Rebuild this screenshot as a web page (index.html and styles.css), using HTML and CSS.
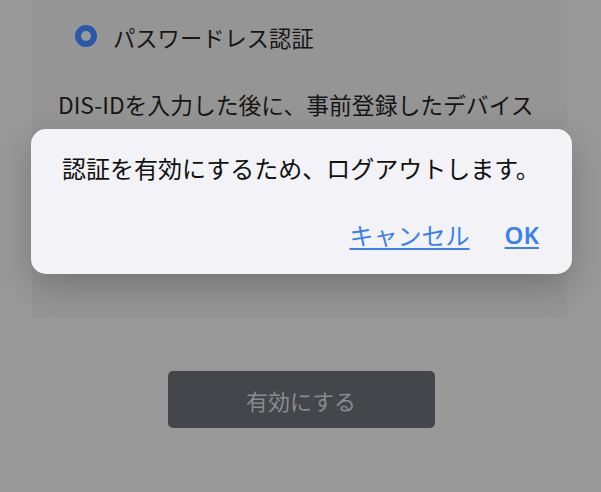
FILE: index.html
```html
<!DOCTYPE html>
<html lang="ja">
<head>
<meta charset="utf-8">
<link rel="stylesheet" href="styles.css">
</head>
<body>
<div class="page">
  <div class="card">
    <div class="radio-row">
      <span class="radio"></span>
      <span class="radio-label">パスワードレス認証</span>
    </div>
    <p class="desc">DIS-IDを入力した後に、事前登録したデバイス</p>
  </div>
  <div class="actions">
    <button class="enable">有効にする</button>
  </div>
</div>
<div class="dialog">
  <p class="message">認証を有効にするため、ログアウトします。</p>
  <div class="dialog-buttons">
    <a class="link" href="#">キャンセル</a>
    <a class="link ok" href="#">OK</a>
  </div>
</div>
</body>
</html>
```
FILE: styles.css
```css
html, body {
  margin: 0;
  padding: 0;
  background: #999999;
  font-family: "Noto Sans CJK JP", "Noto Sans", sans-serif;
  width: 601px;
  height: 492px;
  overflow: hidden;
}
.page {
  display: flex;
  flex-direction: column;
}
.card {
  margin-left: 32px;
  width: 535px;
  height: 318px;
  background: #959595;
  box-sizing: border-box;
  padding: 21px 0 0 43px;
}
.radio-row {
  display: flex;
  align-items: center;
  gap: 16px;
  height: 30px;
}
.radio {
  width: 22px;
  height: 22px;
  box-sizing: border-box;
  border-radius: 50%;
  border: 6px solid #2a59ab;
  background: #9a9a9a;
}
.radio-label {
  font-size: 22.3px;
  color: #161616;
  line-height: 30px;
  position: relative;
  top: 1px;
}
.desc {
  margin: 39px 0 0 -17px;
  font-size: 22.8px;
  line-height: 30px;
  color: #161616;
  white-space: nowrap;
}
.actions {
  display: flex;
  justify-content: center;
  padding-top: 53px;
  padding-left: 1px;
}
.enable {
  width: 267px;
  height: 57px;
  border: none;
  border-radius: 5px;
  background: #43464b;
  color: #8b8b8b;
  font-family: "Noto Sans CJK JP", sans-serif;
  font-size: 22px;
}
.dialog {
  position: absolute;
  left: 31px;
  top: 129px;
  width: 541px;
  height: 145px;
  box-sizing: border-box;
  background: #f2f2f7;
  border-radius: 15px;
  box-shadow: 0 12px 36px rgba(0, 0, 0, 0.22);
  padding: 22px 33px 0 31px;
}
.message {
  margin: 0;
  font-size: 24px;
  line-height: 34px;
  color: #111111;
  white-space: nowrap;
}
.dialog-buttons {
  display: flex;
  justify-content: flex-end;
  gap: 35px;
  margin-top: 33px;
}
.link {
  font-size: 24px;
  line-height: 34px;
  color: #3b80f0;
  text-decoration: underline;
  text-underline-offset: 3px;
}
.ok {
  font-family: "Noto Sans", sans-serif;
  font-weight: 600;
}
```
